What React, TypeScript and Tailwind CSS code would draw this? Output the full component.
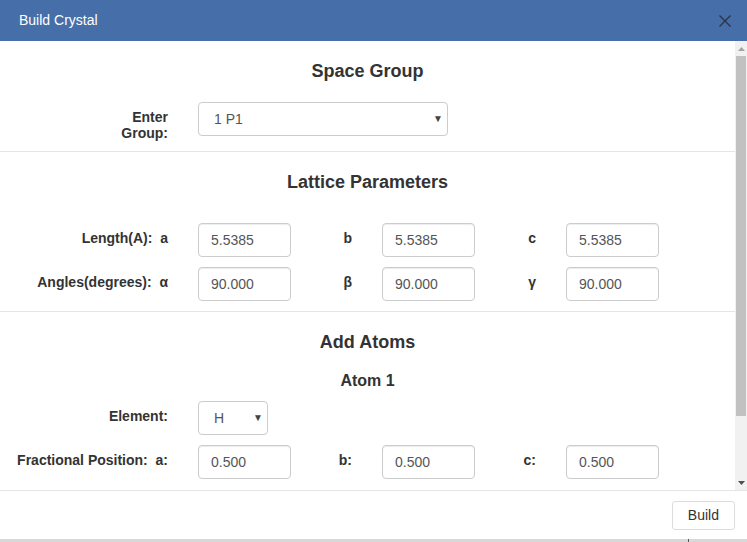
const font = { fontFamily: '"Liberation Sans", Arial, sans-serif' };

function TextBox({ value }: { value: string }) {
  return (
    <div className="w-[93px] h-[34px] border border-[#ccc] rounded-[4px] bg-white shadow-[inset_0_1px_1px_rgba(0,0,0,0.075)] flex items-center pl-[12px] text-[14px] text-[#555]">
      {value}
    </div>
  );
}

function SelectBox({ value, width }: { value: string; width: string }) {
  return (
    <div
      className={`${width} h-[34px] border border-[#ccc] rounded-[4px] bg-white flex items-center justify-between pl-[15px] pr-[4px] text-[14px] text-[#555]`}
    >
      <span>{value}</span>
      <span className="text-[10px] text-[#444] leading-none">▼</span>
    </div>
  );
}

function Row({
  label,
  cells,
  className = "",
}: {
  label: string;
  cells: { label?: string; value: string }[];
  className?: string;
}) {
  return (
    <div className={`flex items-start ${className}`}>
      <div className="w-[168px] text-right font-bold text-[14px] text-[#333] pt-[5px] leading-[20px] whitespace-pre">
        {label}
      </div>
      {cells.map((c, i) => (
        <div key={i} className="flex items-start">
          {i > 0 && (
            <div className="w-[61px] text-right font-bold text-[14px] text-[#333] pt-[5px] leading-[20px]">
              {c.label}
            </div>
          )}
          <div className="ml-[30px]">
            <TextBox value={c.value} />
          </div>
        </div>
      ))}
    </div>
  );
}

export default function App() {
  return (
    <div className="w-[747px] h-[542px] bg-white flex flex-col overflow-hidden" style={font}>
      <div className="h-[41px] shrink-0 bg-[#466ea9] flex items-center justify-between pl-[19px] pr-[15px]">
        <span className="text-white text-[14px]">Build Crystal</span>
        <svg width="14" height="14" viewBox="0 0 14 14" className="mt-[1px]">
          <path d="M1.5 1.5 L12.5 12.5 M12.5 1.5 L1.5 12.5" stroke="#2b3447" strokeWidth="1.4" />
        </svg>
      </div>

      <div className="h-[449px] shrink-0 flex">
        <div className="flex-1 overflow-hidden">
          <div className="pt-[20px] pb-[15px] border-b border-[#e5e5e5]">
            <h3 className="text-center font-bold text-[18px] leading-[20px] text-[#333]">Space Group</h3>
            <div className="flex items-start h-[34px] mt-[21px]">
              <div className="w-[168px] text-right font-bold text-[14px] text-[#333] leading-[16px] pt-[7px]">
                Enter
                <br />
                Group:
              </div>
              <div className="ml-[30px]">
                <SelectBox value="1 P1" width="w-[250px]" />
              </div>
            </div>
          </div>

          <div className="pt-[20px] pb-[10px] border-b border-[#e5e5e5]">
            <h3 className="text-center font-bold text-[18px] leading-[20px] text-[#333]">Lattice Parameters</h3>
            <Row
              className="mt-[31px]"
              label={"Length(A):  a"}
              cells={[{ value: "5.5385" }, { label: "b", value: "5.5385" }, { label: "c", value: "5.5385" }]}
            />
            <Row
              className="mt-[10px]"
              label={"Angles(degrees):  α"}
              cells={[{ value: "90.000" }, { label: "β", value: "90.000" }, { label: "γ", value: "90.000" }]}
            />
          </div>

          <div className="pt-[20px]">
            <h3 className="text-center font-bold text-[18px] leading-[20px] text-[#333]">Add Atoms</h3>
            <h4 className="text-center font-bold text-[16px] leading-[20px] text-[#333] mt-[19px]">Atom 1</h4>
            <div className="flex items-start mt-[10px]">
              <div className="w-[168px] text-right font-bold text-[14px] text-[#333] pt-[5px] leading-[20px]">
                Element:
              </div>
              <div className="ml-[30px]">
                <SelectBox value="H" width="w-[70px]" />
              </div>
            </div>
            <Row
              className="mt-[10px]"
              label={"Fractional Position:  a:"}
              cells={[{ value: "0.500" }, { label: "b:", value: "0.500" }, { label: "c:", value: "0.500" }]}
            />
          </div>
        </div>

        <div className="w-[12px] shrink-0 bg-[#f1f1f1] flex flex-col items-center">
          <div className="h-[15px] flex items-center justify-center">
            <svg width="7" height="4" viewBox="0 0 7 4">
              <path d="M0 4 L3.5 0 L7 4 Z" fill="#a3a3a3" />
            </svg>
          </div>
          <div className="w-[10px] h-[360px] bg-[#c1c1c1]" />
          <div className="flex-1" />
          <div className="h-[15px] flex items-center justify-center">
            <svg width="7" height="4" viewBox="0 0 7 4">
              <path d="M0 0 L7 0 L3.5 4 Z" fill="#505050" />
            </svg>
          </div>
        </div>
      </div>

      <div className="flex-1 border-t border-[#e5e5e5] flex justify-end items-start pt-[10px] pr-[12px]">
        <button className="h-[29px] px-[15px] border border-[#ddd] rounded-[3px] bg-white text-[14px] text-[#333]">
          Build
        </button>
      </div>
      <div className="h-[3px] shrink-0 bg-[#d8d8d8] flex">
        <div className="w-[688px]" />
        <div className="w-px bg-[#555]" />
      </div>
    </div>
  );
}
